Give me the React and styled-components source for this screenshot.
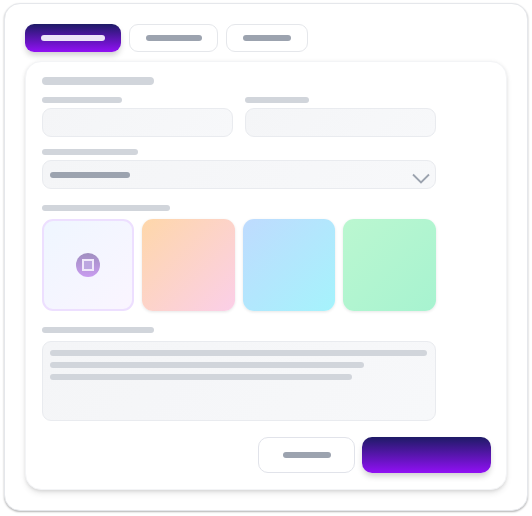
import React from 'react';
import styled, { createGlobalStyle } from 'styled-components';

const Global = createGlobalStyle`
  html, body { margin: 0; padding: 0; background: #fff; font-family: "Inter", sans-serif; }
  #root { width: 532px; height: 516px; overflow: hidden; }
`;

const violet = 'linear-gradient(180deg, #1e1b66 0%, #9110f5 100%)';

const Frame = styled.div`
  box-sizing: border-box;
  width: 524.5px;
  height: 508px;
  margin: 3px 0 0 3.5px;
  padding: 20px 20px 0 20.5px;
  background: #fff;
  border: 1px solid #e5e7eb;
  border-radius: 16px;
  box-shadow: 0 1px 2px rgba(0, 0, 0, 0.3);
`;
const Tabs = styled.div`
  display: flex;
  gap: 8px;
  height: 28px;
  margin-bottom: 9px;
`;
const Tab = styled.div`
  box-sizing: border-box;
  width: ${p => p.$w}px;
  display: flex;
  align-items: center;
  justify-content: center;
  border-radius: 9px;
  background: ${p => (p.$active ? violet : '#fff')};
  border: ${p => (p.$active ? 'none' : '1px solid #e5e7eb')};
  box-shadow: ${p => (p.$active ? '0 4px 6px -1px rgba(0, 0, 0, 0.2)' : 'none')};
`;
const Bar = styled.div`
  flex: none;
  width: ${p => p.$w}px;
  height: 6px;
  border-radius: 3px;
  background: ${p => p.$c || '#d1d5db'};
`;
const Card = styled.div`
  box-sizing: border-box;
  width: 482px;
  height: 429px;
  padding: 15px 15px 0 15.67px;
  background: #fff;
  border: 1px solid #f3f4f6;
  border-radius: 16px;
  box-shadow: 0 4px 6px -1px rgba(0, 0, 0, 0.1), 0 2px 4px -2px rgba(0, 0, 0, 0.1), 0 0 4px rgba(0, 0, 0, 0.05);
`;
const Form = styled.div`
  width: 394.33px;
  display: flex;
  flex-direction: column;
`;
const Heading = styled(Bar)`
  margin: 0 0 12px;
  height: 8px;
  border-radius: 4px;
`;
const Row = styled.div`
  display: grid;
  grid-template-columns: 1fr 1fr;
  gap: 12px;
`;
const Label = styled(Bar)`
  margin: 0 0 ${p => p.$mb || 5}px;
`;
const Field = styled.div`
  box-sizing: border-box;
  position: relative;
  display: flex;
  align-items: ${p => (p.$multi ? 'flex-start' : 'center')};
  flex-direction: ${p => (p.$multi ? 'column' : 'row')};
  gap: 6px;
  height: ${p => p.$h || 29}px;
  padding: ${p => (p.$multi ? '8px 8px 8px 7.67px' : '0 8px 0 7.67px')};
  background-image: linear-gradient(135deg, #f4f5f7, #f7f8fa);
  border: 1px solid #e9ebef;
  border-radius: 9px;
`;
const Gap = styled.div`
  height: ${p => p.$h}px;
`;
const Chevron = styled.svg`
  position: absolute;
  right: 4px;
  top: 10px;
  width: 20px;
  height: 14px;
`;
const Tiles = styled.div`
  display: grid;
  grid-template-columns: repeat(4, 1fr);
  gap: 8px;
`;
const Tile = styled.div`
  box-sizing: border-box;
  height: 92px;
  display: flex;
  align-items: center;
  justify-content: center;
  border-radius: 11px;
  background: ${p => p.$bg};
  border: ${p => (p.$selected ? '2px solid #eddfff' : 'none')};
  box-shadow: ${p => (p.$selected ? 'none' : '0 1px 3px rgba(0, 0, 0, 0.1)')};
`;
const Badge = styled.div`
  box-sizing: border-box;
  width: 24px;
  height: 24px;
  border-radius: 50%;
  display: flex;
  align-items: center;
  justify-content: center;
  background: linear-gradient(180deg, #a08fc0, #c99cf0);
`;
const Square = styled.div`
  box-sizing: border-box;
  width: 12px;
  height: 12px;
  background: #bca6e0;
  border: 2px solid #efe8fa;
`;
const Actions = styled.div`
  display: flex;
  justify-content: flex-end;
  gap: 7px;
  margin-top: 16px;
`;
const Secondary = styled.div`
  box-sizing: border-box;
  width: 97px;
  height: 36px;
  display: flex;
  align-items: center;
  justify-content: center;
  background: #fff;
  border: 1px solid #e1e3ea;
  border-radius: 10px;
`;
const Primary = styled.div`
  width: 129px;
  height: 36px;
  border-radius: 10px;
  background: ${violet};
  box-shadow: 0 4px 6px -1px rgba(0, 0, 0, 0.2);
`;

const gray = '#9ca3af';

export default function App() {
  return (
    <>
      <Global />
      <Frame>
        <Tabs>
          <Tab $active $w={96}><Bar $w={64} $c="#ece4f8" /></Tab>
          <Tab $w={89}><Bar $w={56} $c={gray} /></Tab>
          <Tab $w={82}><Bar $w={48} $c={gray} /></Tab>
        </Tabs>
        <Card>
          <Form>
            <Heading $w={112} />
            <Row>
              <div>
                <Label $w={80} />
                <Field />
              </div>
              <div>
                <Label $w={64} />
                <Field />
              </div>
            </Row>
            <Gap $h={12} />
            <Label $w={96} />
            <Field>
              <Bar $w={80} $c={gray} />
              <Chevron viewBox="0 0 20 14" fill="none">
                <path d="M2 3.5 L10 11.5 L18 3.5" stroke="#9ca3af" strokeWidth="1.8" />
              </Chevron>
            </Field>
            <Gap $h={16} />
            <Label $w={128} $mb={8} />
            <Tiles>
              <Tile $selected $bg="linear-gradient(135deg, #eff6ff, #faf5ff)">
                <Badge><Square /></Badge>
              </Tile>
              <Tile $bg="linear-gradient(135deg, #fed7aa, #fbcfe8)" />
              <Tile $bg="linear-gradient(135deg, #bfdbfe, #a5f3fc)" />
              <Tile $bg="linear-gradient(135deg, #bbf7d0, #a7f3d0)" />
            </Tiles>
            <Gap $h={16} />
            <Label $w={112} $mb={8} />
            <Field $multi $h={80}>
              <Bar $w={377} />
              <Bar $w={314} />
              <Bar $w={302} />
            </Field>
          </Form>
          <Actions>
            <Secondary><Bar $w={48} $c={gray} /></Secondary>
            <Primary />
          </Actions>
        </Card>
      </Frame>
    </>
  );
}
